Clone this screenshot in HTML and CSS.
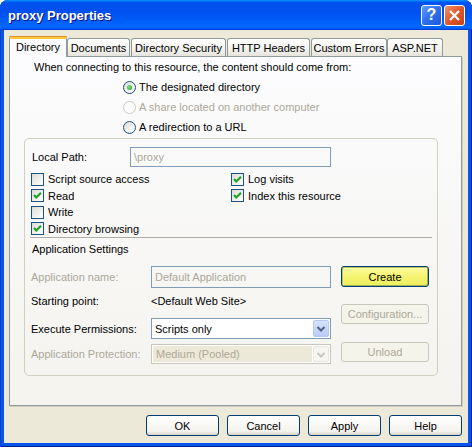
FILE: index.html
```html
<!DOCTYPE html>
<html>
<head>
<meta charset="utf-8">
<title>proxy Properties</title>
<link rel="stylesheet" href="styles.css">
</head>
<body>
<div class="window">
  <div class="titlebar">
    <span class="title">proxy Properties</span>
    <div class="tbtns">
      <span class="tbtn help">?</span>
      <span class="tbtn close"><svg width="19" height="19" viewBox="0 0 19 19"><path d="M5 5 L14 14 M14 5 L5 14" stroke="#fff" stroke-width="2.2" fill="none"/></svg></span>
    </div>
  </div>
  <div class="client">
    <div class="tabs">
      <div class="tab active t-dir">Directory</div>
      <div class="tab t-doc">Documents</div>
      <div class="tab t-sec">Directory Security</div>
      <div class="tab t-http">HTTP Headers</div>
      <div class="tab t-err">Custom Errors</div>
      <div class="tab t-asp">ASP.NET</div>
    </div>
    <div class="panel">
      <p class="intro">When connecting to this resource, the content should come from:</p>
      <div class="radios">
        <div class="radio-row"><span class="radio checked"></span><span>The designated directory</span></div>
        <div class="radio-row disabled"><span class="radio"></span><span>A share located on another computer</span></div>
        <div class="radio-row"><span class="radio"></span><span>A redirection to a URL</span></div>
      </div>
      <div class="group">
        <div class="path-row">
          <span class="path-label">Local Path:</span>
          <div class="field path-field">\proxy</div>
        </div>
        <div class="checks">
          <div class="check-row"><span class="cb"></span><span>Script source access</span></div>
          <div class="check-row"><span class="cb"><svg width="11" height="11" viewBox="0 0 11 11"><path d="M2 5 L4.3 7.5 L9 2.8" stroke="#21A121" stroke-width="2.2" fill="none"/></svg></span><span>Read</span></div>
          <div class="check-row"><span class="cb"></span><span>Write</span></div>
          <div class="check-row"><span class="cb"><svg width="11" height="11" viewBox="0 0 11 11"><path d="M2 5 L4.3 7.5 L9 2.8" stroke="#21A121" stroke-width="2.2" fill="none"/></svg></span><span>Directory browsing</span></div>
          <div class="check-row"><span class="cb"><svg width="11" height="11" viewBox="0 0 11 11"><path d="M2 5 L4.3 7.5 L9 2.8" stroke="#21A121" stroke-width="2.2" fill="none"/></svg></span><span>Log visits</span></div>
          <div class="check-row"><span class="cb"><svg width="11" height="11" viewBox="0 0 11 11"><path d="M2 5 L4.3 7.5 L9 2.8" stroke="#21A121" stroke-width="2.2" fill="none"/></svg></span><span>Index this resource</span></div>
        </div>
        <div class="sep"></div>
        <div class="section-title">Application Settings</div>
        <div class="settings">
          <div class="set-left">
            <div class="set-row r1">
              <span class="set-label dim">Application name:</span>
              <div class="field app-field">Default Application</div>
            </div>
            <div class="set-row r2">
              <span class="set-label">Starting point:</span>
              <span class="set-value">&lt;Default Web Site&gt;</span>
            </div>
            <div class="set-row r3">
              <span class="set-label">Execute Permissions:</span>
              <div class="select">
                <span class="sel-val">Scripts only</span>
                <span class="sel-btn"><svg width="14" height="15" viewBox="0 0 14 15"><path d="M3.5 6 L7 9.5 L10.5 6" stroke="#4D6185" stroke-width="2" fill="none"/></svg></span>
              </div>
            </div>
            <div class="set-row r4">
              <span class="set-label dim">Application Protection:</span>
              <div class="select disabled">
                <span class="sel-val">Medium (Pooled)</span>
                <span class="sel-btn"><svg width="14" height="15" viewBox="0 0 14 15"><path d="M3.5 6 L7 9.5 L10.5 6" stroke="#C9C7BA" stroke-width="2" fill="none"/></svg></span>
              </div>
            </div>
          </div>
          <div class="set-right">
            <div class="btn create">Create</div>
            <div class="btn disabled b-config">Configuration...</div>
            <div class="btn disabled b-unload">Unload</div>
          </div>
        </div>
      </div>
    </div>
    <div class="footer">
      <div class="btn fbtn">OK</div>
      <div class="btn fbtn">Cancel</div>
      <div class="btn fbtn">Apply</div>
      <div class="btn fbtn">Help</div>
    </div>
  </div>
</div>
</body>
</html>
```

FILE: styles.css
```css
* { box-sizing: border-box; }
html, body { margin: 0; padding: 0; background: #ffffff; }
body {
  font-family: "Liberation Sans", Arial, sans-serif;
  font-size: 11px;
  color: #000;
}
.window {
  width: 472px;
  height: 447px;
  background: #0655E8;
  border-radius: 8px 8px 0 0;
  display: flex;
  flex-direction: column;
  overflow: hidden;
  box-shadow: inset 1px 0 #0A3FC9, inset -1px 0 #001EA0, inset 0 -1px #001EA0;
}
.titlebar {
  height: 30px;
  flex: none;
  display: flex;
  align-items: center;
  padding: 0 7px 0 8px;
  background: linear-gradient(180deg, #0997ff 0%, #0053ee 8%, #0050ee 40%, #0066ff 88%, #0066ff 93%, #005bff 95%, #003dd7 96%, #003dd7 100%);
}
.title {
  flex: 1;
  color: #fff;
  font-weight: bold;
  font-size: 13px;
  text-shadow: 1px 1px #0F1089;
  padding-top: 1px;
}
.tbtns { display: flex; gap: 2px; }
.tbtn {
  width: 21px;
  height: 21px;
  border: 1px solid #fff;
  border-radius: 3px;
  display: flex;
  align-items: center;
  justify-content: center;
}
.help {
  background: linear-gradient(135deg, #5E9BFA 0%, #2F6EEE 50%, #1E56D8 100%);
  color: #fff;
  font-weight: bold;
  font-size: 16px;
  line-height: 1;
}
.close {
  background: linear-gradient(135deg, #F0936C 0%, #E0582C 50%, #C8401A 100%);
}
.client {
  flex: 1;
  margin: 0 4px 4px;
  background: #ECE9D8;
  padding: 6px 6px 0 5px;
  display: flex;
  flex-direction: column;
}
.tabs {
  display: flex;
  align-items: flex-end;
  height: 21px;
  margin-bottom: -1px;
  position: relative;
  z-index: 1;
}
.tab {
  height: 18px;
  margin-bottom: 1px;
  margin-left: 1px;
  border: 1px solid #919B9C;
  border-bottom: none;
  border-radius: 3px 3px 0 0;
  background: linear-gradient(#FFFFFF, #F3F2EE 60%, #E6E4DC);
  display: flex;
  align-items: center;
  justify-content: center;
  padding-top: 1px;
}
.tab.active {
  height: 21px;
  margin-bottom: 0;
  margin-left: 0;
  background: #FCFCFE;
  border-top: 3px solid #FFC83C;
  box-shadow: inset 0 0 0 0 transparent;
  padding-top: 0;
  padding-bottom: 3px;
  position: relative;
}
.tab.active::before {
  content: "";
  position: absolute;
  left: -1px; right: -1px; top: -3px;
  height: 1px;
  background: #E68B2C;
  border-radius: 3px 3px 0 0;
}
.t-dir { width: 58px; }
.t-doc { width: 63px; margin-left: 0; }
.t-sec { width: 95px; }
.t-http { width: 83px; }
.t-err { width: 76px; }
.t-asp { width: 56px; margin-left: 0; }
.panel {
  width: 453px;
  height: 350px;
  flex: none;
  border: 1px solid #919B9C;
  background: linear-gradient(#FCFCFE, #F4F3EE);
  box-shadow: 1px 1px 0 #D0CEBF;
}
.intro {
  margin: 3px 0 0 24px;
  line-height: 14px;
}
.radios {
  margin: 3px 0 0 113px;
}
.radio-row {
  height: 20px;
  display: flex;
  align-items: center;
  gap: 3px;
}
.radio-row.disabled { color: #ACA899; }
.radio {
  width: 13px;
  height: 13px;
  border-radius: 50%;
  border: 1px solid #1C5180;
  background: linear-gradient(135deg, #DCDCD7, #FFFFFF);
  display: flex;
  align-items: center;
  justify-content: center;
  flex: none;
}
.radio-row.disabled .radio {
  border-color: #CAC8BB;
  background: #FFFFFF;
}
.radio.checked::after {
  content: "";
  width: 5px;
  height: 5px;
  border-radius: 50%;
  background: radial-gradient(circle at 40% 40%, #7BE379, #21A121);
}
.group {
  margin: 1px 0 0 14px;
  width: 414px;
  height: 238px;
  border: 1px solid #D0D0BF;
  border-radius: 5px;
}
.path-row {
  display: flex;
  align-items: center;
  height: 20px;
  margin: 8px 0 0 7px;
}
.path-label { width: 98px; }
.field {
  border: 1px solid #7F9DB9;
  color: #ACA899;
  display: flex;
  align-items: center;
  padding-left: 3px;
}
.path-field { width: 201px; height: 20px; }
.checks {
  margin: 4px 0 0 6px;
  display: grid;
  grid-template-columns: 200px auto;
  grid-template-rows: repeat(4, 16.5px);
  grid-auto-flow: column;
}
.check-row {
  display: flex;
  align-items: center;
  gap: 4px;
}
.cb {
  width: 13px;
  height: 13px;
  border: 1px solid #1C5180;
  background: linear-gradient(135deg, #DCDCD7, #FFFFFF);
  display: flex;
  align-items: center;
  justify-content: center;
  flex: none;
}
.cb svg { display: block; }
.sep {
  margin-left: 5px;
  width: 402px;
  border-top: 1px solid #B0AEA4;
}
.section-title {
  margin: 4px 0 0 7px;
  line-height: 14px;
}
.settings {
  margin: 10px 0 0 6px;
  display: flex;
}
.set-left { width: 300px; }
.set-row { display: flex; align-items: center; }
.set-label { width: 120px; }
.dim { color: #ACA899; }
.r1 { height: 22px; }
.r2 { height: 14px; margin-top: 6px; }
.r3 { height: 21px; margin-top: 10px; }
.r4 { height: 20px; margin-top: 5px; }
.app-field { width: 180px; height: 22px; }
.select {
  width: 180px;
  height: 100%;
  border: 1px solid #7F9DB9;
  background: #FFFFFF;
  display: flex;
  align-items: stretch;
}
.sel-val {
  flex: 1;
  display: flex;
  align-items: center;
  padding-left: 3px;
}
.sel-btn {
  width: 16px;
  margin: 1px;
  border-radius: 2px;
  border: 1px solid #B4C8F3;
  background: linear-gradient(#D7E3FD, #B6CBF7);
  display: flex;
  align-items: center;
  justify-content: center;
}
.select.disabled {
  border-color: #C9C7BA;
  background: #FFFFFF;
  color: #ACA899;
}
.select.disabled .sel-val {
  background: #ECE9D8;
  margin: 1px 0 1px 1px;
}
.select.disabled .sel-btn {
  border-color: #E8E6DC;
  background: #F7F6F0;
}
.set-right {
  margin-left: 10px;
  width: 88px;
  display: flex;
  flex-direction: column;
}
.btn {
  border: 1px solid #003C74;
  border-radius: 3px;
  background: linear-gradient(#FFFFFF, #F4F3EE 80%, #D8D2C6);
  display: flex;
  align-items: center;
  justify-content: center;
}
.btn.disabled {
  border-color: #C9C7BA;
  background: #F5F4EA;
  color: #ACA899;
}
.create {
  height: 21px;
  background: linear-gradient(#FBFBA6, #F4F470 50%, #EEEE5E);
  box-shadow: inset 1px 1px 0 #B8C56A, inset -1px -1px 0 #9EB25A;
}
.b-config { height: 20px; margin-top: 17px; }
.b-unload { height: 20px; margin-top: 18px; }
.footer {
  margin-top: 9px;
  display: flex;
  justify-content: flex-end;
  gap: 8px;
}
.fbtn { width: 73px; height: 21px; }
```
